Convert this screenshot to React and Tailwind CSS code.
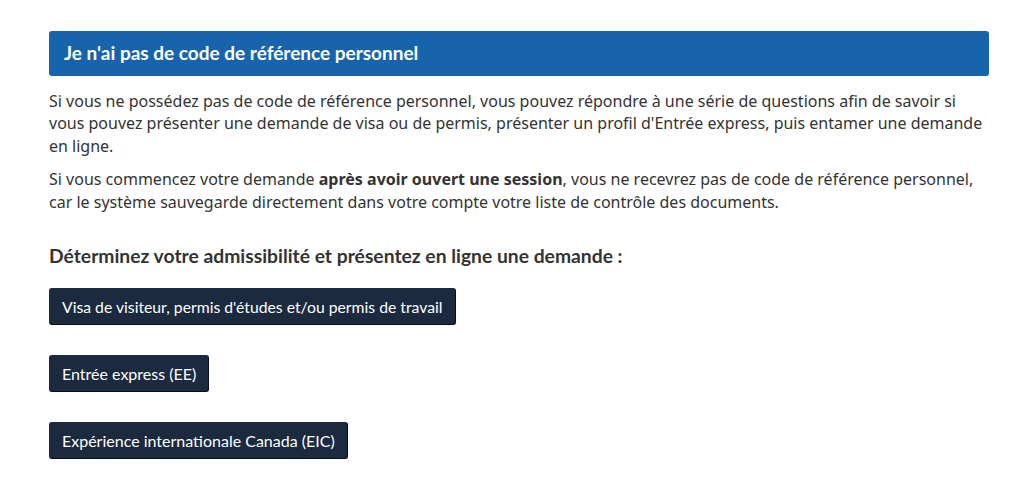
export default function App() {
  const buttons = [
    { label: "Visa de visiteur, permis d'études et/ou permis de travail", size: 'text-[15.75px]' },
    { label: 'Entrée express (EE)', size: 'text-[16px]' },
    { label: 'Expérience internationale Canada (EIC)', size: 'text-[16px]' },
  ];

  return (
    <div className="min-h-screen bg-white px-[49px] pt-[31px] text-[#333]">
      <div className="w-[940px]">
        <h2 className="flex h-[45px] items-center rounded-[3px] bg-[#1764ad] px-[15px] font-['Lato',sans-serif] text-[19px] font-bold text-white">
          Je n'ai pas de code de référence personnel
        </h2>

        <div className="mt-[14px] font-['Noto_Sans',sans-serif] text-[16px] leading-[22.4px]">
          <p>
            Si vous ne possédez pas de code de référence personnel, vous pouvez répondre à une série de questions afin de savoir si
            vous pouvez présenter une demande de visa ou de permis, présenter un profil d'Entrée express, puis entamer une demande
            en ligne.
          </p>
          <p className="mt-[11px]">
            Si vous commencez votre demande <strong className="font-bold">après avoir ouvert une session</strong>, vous ne recevrez pas de code de référence personnel,
            car le système sauvegarde directement dans votre compte votre liste de contrôle des documents.
          </p>
        </div>

        <h3 className="mt-[31px] font-['Lato',sans-serif] text-[19.3px] font-bold leading-[24px] text-[#333]">
          Déterminez votre admissibilité et présentez en ligne une demande :
        </h3>

        <div className="mt-[20px] flex flex-col items-start gap-[30px]">
          {buttons.map((b) => (
            <button
              key={b.label}
              className={`h-[37px] rounded-[3px] border border-[#1c2a40] border-b-[#05101c] border-r-[#05101c] bg-[#1c2a40] px-[12px] font-['Lato',sans-serif] text-white ${b.size}`}
            >
              {b.label}
            </button>
          ))}
        </div>
      </div>
    </div>
  );
}
